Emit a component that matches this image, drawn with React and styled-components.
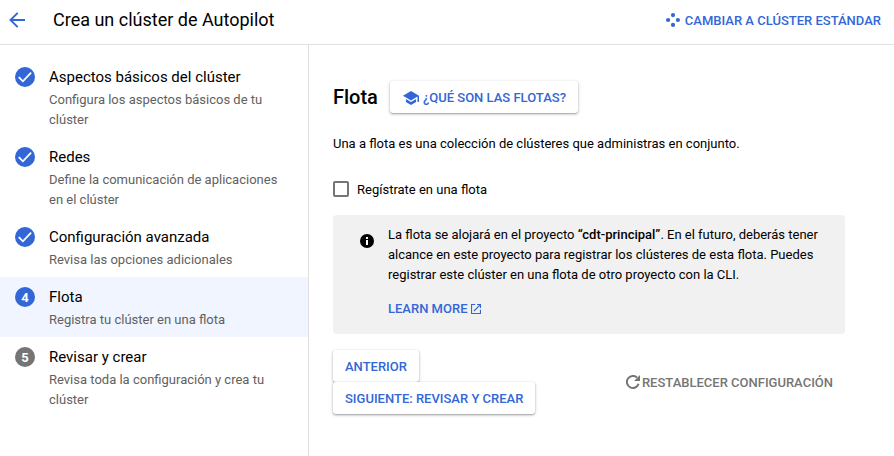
import React from "react";
import styled, { createGlobalStyle } from "styled-components";

const BLUE = "#3367d6";

const GlobalStyle = createGlobalStyle`
  * { box-sizing: border-box; }
  body {
    margin: 0;
    background: #fff;
    color: #000;
    font: 400 13px/20px Roboto, "Liberation Sans", sans-serif;
  }
  button { font: inherit; border: 0; background: none; padding: 0; cursor: pointer; }
  h1, h2, p { margin: 0; }
  svg { display: block; flex: none; }
`;

const Page = styled.div`
  height: 456px;
  display: flex;
  flex-direction: column;
  overflow: hidden;
`;

const Header = styled.header`
  height: 45px;
  flex: none;
  display: flex;
  align-items: center;
  padding: 0 13px 4px 9px;
  border-bottom: 1px solid #e0e0e0;
`;

const BackButton = styled.button`
  width: 16px;
  margin-right: 28px;
`;

const PageTitle = styled.h1`
  flex: 1;
  font-size: 18px;
  font-weight: 400;
  line-height: 24px;
`;

const TextButton = styled.button`
  && {
    display: inline-flex;
    align-items: center;
    gap: ${(p) => p.$gap}px;
    color: ${(p) => p.$color || BLUE};
    font-weight: 500;
    white-space: nowrap;
  }
`;

const ButtonLabel = styled.span`
  padding-top: 2px;
`;

const Body = styled.div`
  flex: 1;
  display: flex;
`;

const StepList = styled.nav`
  width: 309px;
  flex: none;
  padding-top: 12px;
  border-right: 1px solid #e0e0e0;
`;

const Step = styled.div`
  display: flex;
  gap: 14px;
  padding: 10px 24px 10px 15px;
  background: ${(p) => (p.$active ? "#f0f5ff" : "transparent")};
`;

const StepBadge = styled.span`
  width: 20px;
  height: 20px;
  flex: none;
  display: flex;
  align-items: center;
  justify-content: center;
  padding-top: ${(p) => (p.$done ? 0 : 1)}px;
  border-radius: 50%;
  background: ${(p) => (p.$muted ? "#757575" : BLUE)};
  color: #fff;
  font-weight: 700;
  font-size: 13px;
`;

const StepTitle = styled.div`
  font-size: 15px;
`;

const StepText = styled.div`
  padding-top: 3px;
  margin-bottom: -3px;
  color: #616161;
`;

const Content = styled.main`
  flex: 1;
  padding: 36px 49px 0 24px;
`;

const HeadingRow = styled.div`
  display: flex;
  align-items: center;
  gap: 12px;
`;

const Heading = styled.h2`
  font-size: 20px;
  font-weight: 500;
  line-height: 28px;
`;

const RaisedButton = styled.button`
  && {
    height: 32px;
    display: inline-flex;
    align-items: center;
    gap: 4px;
    padding: 1px 12px 0;
    border-radius: 3px;
    background: #fff;
    color: ${BLUE};
    font-weight: 500;
    white-space: nowrap;
    box-shadow: 0 1px 2px rgba(0, 0, 0, 0.32), 0 1px 4px rgba(0, 0, 0, 0.12);
  }
`;

const Description = styled.p`
  padding-top: 21px;
`;

const CheckRow = styled.label`
  display: flex;
  align-items: center;
  gap: 8px;
  margin-top: 25px;
`;

const CheckLabel = styled.span`
  padding-top: 1px;
  margin-bottom: -1px;
`;

const Checkbox = styled.input`
  appearance: none;
  width: 16px;
  height: 16px;
  margin: 0;
  border: 2px solid #757575;
  border-radius: 2px;
`;

const InfoPanel = styled.section`
  height: 119px;
  display: flex;
  gap: 14px;
  margin-top: 16px;
  padding: 10px 20px 0 27px;
  border-radius: 4px;
  background: #f1f1f1;
`;

const InfoIcon = styled.span`
  padding-top: 9px;
`;

const LearnMore = styled.div`
  margin-top: 14px;
`;

const Footer = styled.footer`
  display: flex;
  align-items: center;
  justify-content: space-between;
  margin-top: 16px;
  padding-right: 12px;
`;

const FooterButtons = styled.div`
  display: flex;
  flex-direction: column;
  align-items: flex-start;
`;

const Strong = styled.b`
  font-weight: 500;
`;

const BackIcon = () => (
  <svg width="16" height="16" viewBox="0 0 16 16" fill="none" stroke={BLUE} strokeWidth="1.9">
    <path d="M16 8H2M8.7 .8L1.5 8l7.2 7.2" />
  </svg>
);

const CheckIcon = () => (
  <svg width="20" height="20" viewBox="0 0 20 20" fill="none" stroke="#fff" strokeWidth="1.8">
    <path d="M3.8 10.2l4.1 4.1 8.2-8.6" />
  </svg>
);

const DotsIcon = () => (
  <svg width="14" height="14" viewBox="0 0 14 14" fill={BLUE}>
    <circle cx="7" cy="2.1" r="2.1" />
    <circle cx="2.1" cy="7" r="2.1" />
    <circle cx="11.9" cy="7" r="2.1" />
    <circle cx="7" cy="11.9" r="2.1" />
  </svg>
);

const SchoolIcon = () => (
  <svg width="17" height="14" viewBox="0 0 17 14" fill={BLUE}>
    <path d="M3.9 7.9v3.1L9 14l5.1-3V7.9L9 10.9zM9 0L1 4.7l8 4.7 6.5-3.8v5.4H17V4.7z" />
  </svg>
);

const ExclaimIcon = () => (
  <svg width="14" height="14" viewBox="0 0 14 14">
    <circle cx="7" cy="7" r="7" fill="#000" />
    <path d="M6 3h2v2H6zM6 6h2v5H6z" fill="#fff" />
  </svg>
);

const ExternalIcon = () => (
  <svg width="10" height="10" viewBox="0 0 10 10" fill="none" stroke={BLUE} strokeWidth="1.1">
    <path d="M4.2.55H.55v8.9h8.9V5.8M6 .55h3.45V4M9.3.7L3 7" />
  </svg>
);

const ResetIcon = () => (
  <svg width="14" height="14" viewBox="0 0 14 14" fill="none">
    <path d="M12.6 8.8A6 6 0 1 1 11 2.6" stroke="#757575" strokeWidth="2" />
    <path d="M14 0v6H8z" fill="#757575" />
  </svg>
);

const steps = [
  { title: "Aspectos básicos del clúster", text: "Configura los aspectos básicos de tu clúster", done: true },
  { title: "Redes", text: "Define la comunicación de aplicaciones en el clúster", done: true },
  { title: "Configuración avanzada", text: "Revisa las opciones adicionales", done: true },
  { title: "Flota", text: "Registra tu clúster en una flota", active: true },
  { title: "Revisar y crear", text: "Revisa toda la configuración y crea tu clúster" },
];

export default function App() {
  return (
    <Page>
      <GlobalStyle />
      <Header>
        <BackButton aria-label="Atrás"><BackIcon /></BackButton>
        <PageTitle>Crea un clúster de Autopilot</PageTitle>
        <TextButton $gap={5}><DotsIcon /><ButtonLabel>CAMBIAR A CLÚSTER ESTÁNDAR</ButtonLabel></TextButton>
      </Header>
      <Body>
        <StepList>
          {steps.map((step, i) => (
            <Step key={step.title} $active={step.active}>
              <StepBadge $done={step.done} $muted={!step.done && !step.active}>
                {step.done ? <CheckIcon /> : i + 1}
              </StepBadge>
              <div>
                <StepTitle>{step.title}</StepTitle>
                <StepText>{step.text}</StepText>
              </div>
            </Step>
          ))}
        </StepList>
        <Content>
          <HeadingRow>
            <Heading>Flota</Heading>
            <RaisedButton><SchoolIcon />¿QUÉ SON LAS FLOTAS?</RaisedButton>
          </HeadingRow>
          <Description>Una a flota es una colección de clústeres que administras en conjunto.</Description>
          <CheckRow><Checkbox type="checkbox" /><CheckLabel>Regístrate en una flota</CheckLabel></CheckRow>
          <InfoPanel>
            <InfoIcon><ExclaimIcon /></InfoIcon>
            <div>
              <p>
                La flota se alojará en el proyecto <Strong>“cdt-principal”</Strong>. En el futuro, deberás tener
                alcance en este proyecto para registrar los clústeres de esta flota. Puedes
                registrar este clúster en una flota de otro proyecto con la CLI.
              </p>
              <LearnMore><TextButton $gap={4}>LEARN MORE<ExternalIcon /></TextButton></LearnMore>
            </div>
          </InfoPanel>
          <Footer>
            <FooterButtons>
              <RaisedButton>ANTERIOR</RaisedButton>
              <RaisedButton>SIGUIENTE: REVISAR Y CREAR</RaisedButton>
            </FooterButtons>
            <TextButton $gap={2} $color="#757575"><ResetIcon /><ButtonLabel>RESTABLECER CONFIGURACIÓN</ButtonLabel></TextButton>
          </Footer>
        </Content>
      </Body>
    </Page>
  );
}
